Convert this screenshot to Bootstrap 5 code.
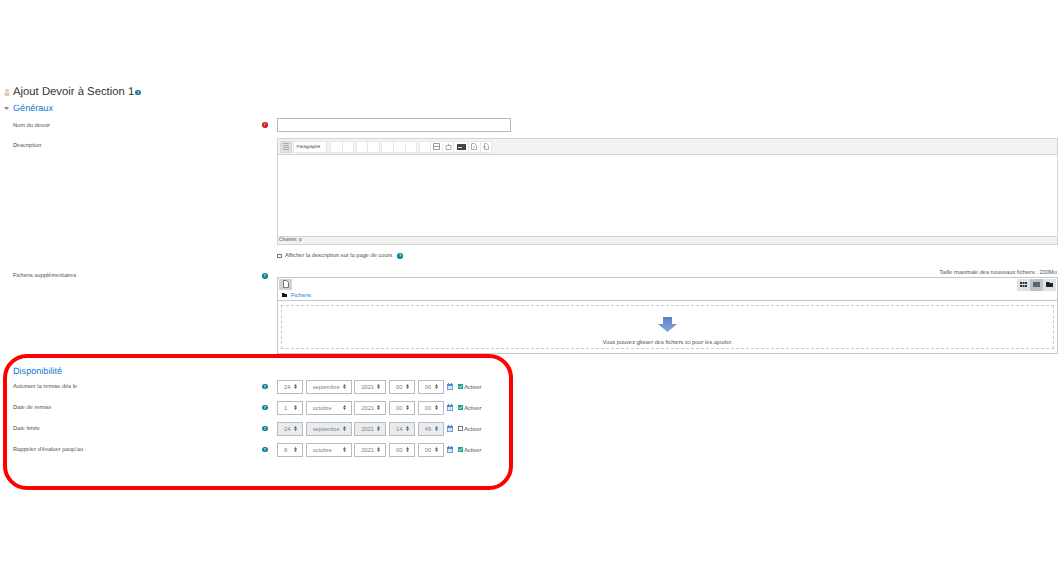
<!DOCTYPE html>
<html lang="fr">
<head>
  <meta charset="UTF-8" />
  <meta name="viewport" content="width=device-width, initial-scale=1.0" />
  <title>Ajout Devoir</title>
  <link href="https://cdn.jsdelivr.net/npm/bootstrap@5.3.0/dist/css/bootstrap.min.css" rel="stylesheet">
  <style>
    html, body { height: 580px; overflow: hidden; }
    body { background: #fff; color: #4a4d50; font-family: "Liberation Sans", Arial, sans-serif; font-size: 5.7px; line-height: 9px; position: relative; text-rendering: geometricPrecision; }
    .page-wrap { padding-top: 86px; width: 1058px; }
    .page-title { font-size: 11.3px; line-height: 15px; font-weight: 400; color: #333; margin: 0; padding-left: 4px; height: 13px; display: flex; align-items: center; gap: 1px; }
    .page-title span { margin-left: 2px; }
    .sect-title { font-size: 9.1px; line-height: 12px; color: #1177d1; font-weight: 400; margin: 0; }
    .sect-first { margin-top: 2px; padding-left: 4px; height: 14px; display: flex; align-items: center; gap: 4px; }
    .form-line { display: flex; }
    .form-lbl { width: 262px; padding-left: 13px; flex: none; }
    .form-help { width: 15px; flex: none; }
    .form-ctrl { width: 781px; flex: none; }
    .help-dot { display: inline-block; width: 5.5px; height: 5.5px; border-radius: 50%; background: #0f7f9b; color: #fff; font-size: 4px; line-height: 5.5px; text-align: center; font-weight: 700; font-style: normal; }
    .err-dot { background: #c9241f; }
    .name-line { margin-top: 3px; height: 20px; align-items: flex-start; }
    .name-line .form-lbl { padding-top: 4px; }
    .name-line .form-help { padding-top: 3px; }
    .name-input { width: 234px; height: 14px; min-height: 0; border: 1px solid #b5b9bd; border-radius: 0; padding: 0; display: block; }
    .desc-line { height: 107px; }
    .desc-line .form-lbl { padding-top: 4px; }
    .ed-box { width: 781px; height: 107px; border: 1px solid #d4d4d4; display: flex; flex-direction: column; }
    .ed-bar { height: 16px; background: #f2f2f2; border-bottom: 1px solid #d4d4d4; display: flex; align-items: center; padding-left: 2px; gap: 2.5px; flex: none; }
    .ed-group { display: flex; }
    .ed-btn { width: 12.6px; height: 12px; background: #fff; border: 1px solid #e8e8e8; margin-left: -1px; display: flex; align-items: center; justify-content: center; }
    .ed-btn svg { display: block; }
    .ed-btn-wide { width: 15.6px; }
    .ed-menu { width: 12px; height: 12px; margin-right: -2px; background: #e2e2e2; border: 1px solid #d8d8d8; display: flex; align-items: center; justify-content: center; }
    .ed-style { width: 34px; height: 12px; margin-right: 2px; background: #fff; border: 1px solid #e8e8e8; font-size: 4.5px; line-height: 10px; padding-left: 3px; color: #333; }
    .ed-area { flex: 1; }
    .ed-status { height: 8px; background: #f2f2f2; border-top: 1px solid #d4d4d4; font-size: 5px; line-height: 7px; padding-left: 1px; flex: none; color: #444; }
    .show-line { margin-top: 6px; height: 10px; padding-left: 277px; display: flex; align-items: center; gap: 3.5px; }
    .show-line .help-dot { margin-left: 1.5px; }
    .tick { appearance: none; display: block; width: 4.5px; height: 4.5px; border: 1px solid #777; background: #fff; margin: 0; flex: none; }
    .tick:checked { border: 0; background: #18a589 url("data:image/svg+xml,%3Csvg xmlns='http://www.w3.org/2000/svg' viewBox='0 0 5 5'%3E%3Cpath fill='none' stroke='%23fff' stroke-width='.9' d='M1 2.500l1 1 2-2'/%3E%3C/svg%3E") center / contain no-repeat; }
    .max-note { margin-top: 7.5px; height: 8px; text-align: right; padding-right: 1px; }
    .file-line { height: 77px; }
    .file-line .form-lbl, .file-line .form-help { margin-top: -4.5px; }
    .fp-box { width: 781px; height: 77px; border: 1px solid #c4c8cc; display: flex; flex-direction: column; }
    .fp-bar { height: 13px; display: flex; justify-content: space-between; padding: 1px 1px 0 1px; flex: none; }
    .fp-add { width: 13px; height: 11px; background: #ced4da; display: flex; align-items: center; justify-content: center; }
    .fp-views { display: flex; }
    .fp-view { width: 13px; height: 12px; background: #dfe3e7; display: flex; align-items: center; justify-content: center; }
    .fp-view.on { background: #bcc4cb; }
    .fp-path { height: 9px; padding-left: 4px; display: flex; align-items: center; gap: 4px; flex: none; }
    .fp-path a { color: #1177d1; text-decoration: none; padding-top: 2px; }
    .fp-drop { border-top: 1px solid #c4c8cc; padding: 4px 3px 4px; flex: 1; }
    .fp-dash { height: 44px; border: 1px dashed #c8c8c8; display: flex; flex-direction: column; align-items: center; padding-top: 11px; }
    .fp-dash p { margin: 7px 0 0; line-height: 9px; }
    .dispo-title { margin-top: 11px; padding-left: 13px; height: 12px; }
    .dates { margin-top: 3px; }
    .date-line { height: 14px; margin-bottom: 7px; }
    .date-line .form-lbl, .date-line .form-help { margin-top: 3px; }
    .date-ctrl { display: flex; align-items: center; gap: 2.7px; }
    .date-sel { appearance: none; height: 14px; border: 1px solid #b8bcc0; border-radius: 0; font-size: 5.7px; line-height: 12px; padding: 0 0 0 6px; color: #7a7f84; background: #fff url("data:image/svg+xml,%3Csvg xmlns='http://www.w3.org/2000/svg' viewBox='0 0 4 7'%3E%3Cpath fill='%23555' d='M2 0l2 3H0zM2 7L0 4h4z'/%3E%3C/svg%3E") right 5px center / 3px 5px no-repeat; font-family: inherit; }
    .date-sel:disabled { background-color: #e9ecef; opacity: 1; }
    .w-day { width: 26px; } .w-month { width: 46px; } .w-year { width: 32px; } .w-time { width: 26px; }
    .cal-ico { display: block; margin-left: 1px; }
    .date-ctrl label { display: flex; align-items: center; gap: 1.5px; margin-left: 2px; }
    .date-ctrl label span { margin-top: 3px; }
    .red-frame { position: absolute; left: 3px; top: 354px; width: 510px; height: 136px; border: 4px solid #f00; border-radius: 24px; pointer-events: none; }
  </style>
</head>
<body>
  <div class="page-wrap">
    <h2 class="page-title">
      <svg width="6" height="7" viewBox="0 0 7 8"><path fill="#c6cfde" d="M1.500 0h4v4h-4z"/><path fill="#e8c8a4" d="M0 4.500h7L6 8H1z"/></svg>
      <span>Ajout Devoir à Section 1</span><i class="help-dot">?</i>
    </h2>
    <h3 class="sect-title sect-first">
      <svg width="5" height="3" viewBox="0 0 5 3"><path fill="#888" d="M0 0h5L2.500 3z"/></svg>Généraux
    </h3>

    <div class="form-line name-line">
      <div class="form-lbl">Nom du devoir</div>
      <div class="form-help"><span class="help-dot err-dot">!</span></div>
      <div class="form-ctrl"><input class="form-control name-input" type="text"></div>
    </div>

    <div class="form-line desc-line">
      <div class="form-lbl">Description</div>
      <div class="form-help"></div>
      <div class="form-ctrl">
        <div class="ed-box">
          <div class="ed-bar">
            <div class="ed-menu"><svg width="6" height="7" viewBox="0 0 6 7"><path fill="#aaa" d="M0 0h6v1H0zM0 2h6v1H0zM0 4h6v1H0zM0 6h6v1H0z"/></svg></div>
            <div class="ed-style">Paragraphe</div>
            <div class="ed-group"><div class="ed-btn"></div><div class="ed-btn"></div></div>
            <div class="ed-group"><div class="ed-btn"></div><div class="ed-btn"></div></div>
            <div class="ed-group"><div class="ed-btn"></div><div class="ed-btn"></div><div class="ed-btn"></div></div>
            <div class="ed-group">
              <div class="ed-btn"></div>
              <div class="ed-btn"><svg width="7" height="7" viewBox="0 0 7 7"><path fill="none" stroke="#999" d="M.5.5h6v6h-6zM.5 3.500h6"/></svg></div>
              <div class="ed-btn"><svg width="7" height="7" viewBox="0 0 7 7"><path fill="none" stroke="#aaa" d="M1 2.500h5v4H1zM3.500 2.500V.5"/></svg></div>
              <div class="ed-btn ed-btn-wide"><svg width="9" height="6" viewBox="0 0 9 6"><path fill="#444" d="M0 0h9v6H0z"/><path fill="#ddd" d="M1 3h4v1H1z"/></svg></div>
              <div class="ed-btn"><svg width="6" height="7" viewBox="0 0 6 7"><path fill="none" stroke="#aaa" d="M.5.5h3l2 2v4h-5zM2 4h2"/></svg></div>
              <div class="ed-btn"><svg width="6" height="7" viewBox="0 0 6 7"><path fill="none" stroke="#aaa" d="M1.500.5h2l2 2v4h-4zM0 4h3"/></svg></div>
            </div>
          </div>
          <div class="ed-area"></div>
          <div class="ed-status">Chemin: p</div>
        </div>
      </div>
    </div>

    <div class="show-line">
      <input class="tick" type="checkbox">
      <span>Afficher la description sur la page de cours</span>
      <span class="help-dot">?</span>
    </div>

    <div class="max-note">Taille maximale des nouveaux fichiers : 200Mo</div>
    <div class="form-line file-line">
      <div class="form-lbl">Fichiers supplémentaires</div>
      <div class="form-help"><span class="help-dot">?</span></div>
      <div class="form-ctrl">
        <div class="fp-box">
          <div class="fp-bar">
            <div class="fp-add"><svg width="6" height="8" viewBox="0 0 6 8"><path fill="#fff" stroke="#444" stroke-width=".7" d="M.5.5h3l2 2v5h-5z"/></svg></div>
            <div class="fp-views">
              <div class="fp-view"><svg width="7" height="5" viewBox="0 0 7 5"><path fill="#333" d="M0 0h2v2H0zM2.500 0h2v2h-2zM5 0h2v2H5zM0 3h2v2H0zM2.500 3h2v2h-2zM5 3h2v2H5z"/></svg></div>
              <div class="fp-view on"><svg width="7" height="5" viewBox="0 0 7 5"><path fill="#5a6670" d="M0 0h7v5H0z"/></svg></div>
              <div class="fp-view"><svg width="7" height="5" viewBox="0 0 7 5"><path fill="#222" d="M0 0h3l1 1h3v4H0z"/></svg></div>
            </div>
          </div>
          <div class="fp-path">
            <svg width="5" height="4" viewBox="0 0 5 4"><path fill="#111" d="M0 0h2l1 1h2v3H0z"/></svg>
            <a href="#">Fichiers</a>
          </div>
          <div class="fp-drop">
            <div class="fp-dash">
              <svg width="19" height="15" viewBox="0 0 19 15">
                <defs><linearGradient id="arrowFill" x1="0" y1="0" x2="0" y2="1"><stop offset="0" stop-color="#5b7fcb"/><stop offset="1" stop-color="#88a5de"/></linearGradient></defs>
                <path fill="url(#arrowFill)" d="M5 0h9v7h5l-9.500 8L0 7h5z"/>
              </svg>
              <p>Vous pouvez glisser des fichiers ici pour les ajouter.</p>
            </div>
          </div>
        </div>
      </div>
    </div>

    <h3 class="sect-title dispo-title">Disponibilité</h3>
    <div class="dates" id="dates"></div>
  </div>
  <div class="red-frame"></div>

  <script>
    const rows = [
      { label: "Autoriser la remise dès le", v: ["24", "septembre", "2021", "00", "00"], on: true },
      { label: "Date de remise", v: ["1", "octobre", "2021", "00", "00"], on: true },
      { label: "Date limite", v: ["24", "septembre", "2021", "14", "49"], on: false },
      { label: "Rappeler d'évaluer jusqu'au", v: ["8", "octobre", "2021", "00", "00"], on: true }
    ];
    const widths = ["w-day", "w-month", "w-year", "w-time", "w-time"];
    const cal = '<svg class="cal-ico" width="6" height="7" viewBox="0 0 6 7"><path fill="#d8e6f5" d="M0 1h6v6H0z"/><path fill="#4a8ad4" d="M0 1h6v2H0zM0 1h.7v6H0zM5.300 1H6v6h-.7zM0 6.300h6V7H0zM1 0h1v1H1zM4 0h1v1H4z"/></svg>';
    document.getElementById("dates").innerHTML = rows.map(r => {
      const sels = r.v.map((x, i) => `<select class="date-sel ${widths[i]}" ${r.on ? "" : "disabled"}><option>${x}</option></select>`).join("");
      return `<div class="form-line date-line">
        <div class="form-lbl">${r.label}</div>
        <div class="form-help"><span class="help-dot">?</span></div>
        <div class="form-ctrl"><div class="date-ctrl">${sels}${cal}
          <label><input class="tick" type="checkbox" ${r.on ? "checked" : ""}><span>Activer</span></label>
        </div></div>
      </div>`;
    }).join("");
  </script>
  <script src="https://cdn.jsdelivr.net/npm/bootstrap@5.3.0/dist/js/bootstrap.bundle.min.js"></script>
</body>
</html>
